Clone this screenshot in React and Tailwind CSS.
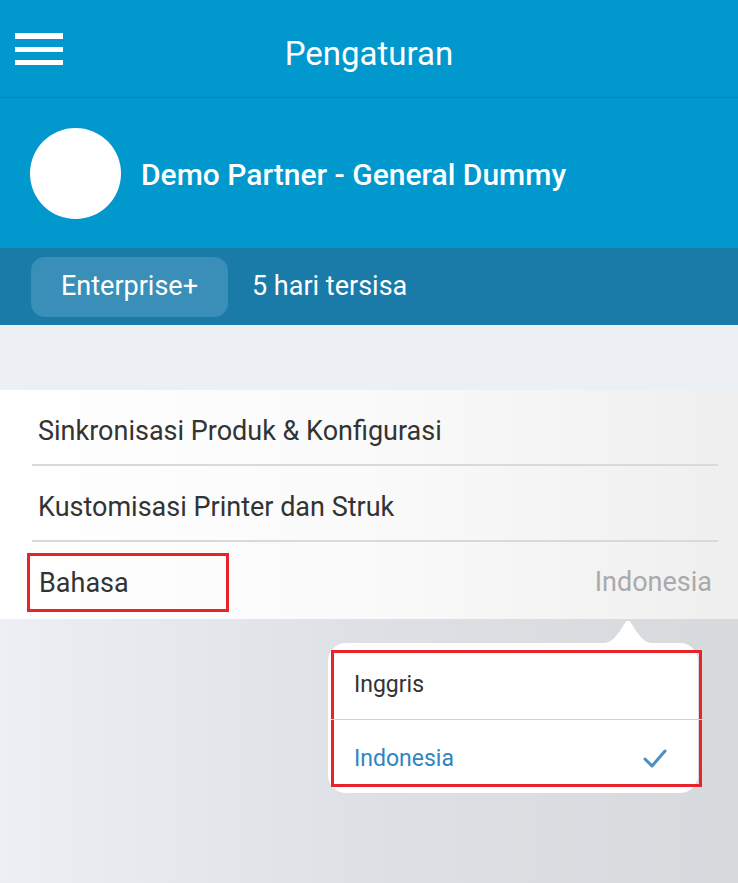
import React from 'react';

const rows = [
  { label: 'Sinkronisasi Produk & Konfigurasi' },
  { label: 'Kustomisasi Printer dan Struk' },
];

const Settings = () => {
  return (
    <div
      className="w-[738px] h-[883px] overflow-hidden flex flex-col bg-[#eceff3]"
      style={{ fontFamily: 'Roboto, "Noto Sans", sans-serif' }}
    >
      {/* Top bar */}
      <div className="h-[98px] shrink-0 bg-[#0098cd] border-b border-[#0a86b6] flex items-center relative">
        <div className="ml-[15px] w-[48px] flex flex-col gap-[8px]">
          <div className="h-[6px] bg-white" />
          <div className="h-[5px] bg-white" />
          <div className="h-[5px] bg-white" />
        </div>
        <div className="absolute inset-0 flex items-center justify-center text-white text-[33px] pt-[10px]">
          Pengaturan
        </div>
      </div>

      {/* Profile */}
      <div className="h-[150px] shrink-0 bg-[#0098cd] flex items-center pl-[30px] gap-[20px]">
        <div className="w-[91px] h-[91px] rounded-full bg-white" />
        <div className="text-white text-[30px] font-medium pt-[2px]">Demo Partner - General Dummy</div>
      </div>

      {/* Subscription */}
      <div className="h-[77px] shrink-0 bg-[#1a7ba8] flex items-center pl-[31px] gap-[24px]">
        <div className="h-[60px] w-[197px] rounded-[14px] bg-[#3a8fb8] flex items-center justify-center text-white text-[27px]">
          Enterprise+
        </div>
        <div className="text-white text-[27px]">5 hari tersisa</div>
      </div>

      <div className="h-[65px] shrink-0" />

      {/* List */}
      <div className="shrink-0 bg-gradient-to-r from-white via-[#fafafa] to-[#efefef]">
        {rows.map((r) => (
          <div key={r.label} className="ml-[32px] mr-[20px] h-[76px] border-b-2 border-[#d9d9d9] flex items-center pl-[6px] pt-[8px] text-[#333] text-[27px]">
            {r.label}
          </div>
        ))}
        <div className="h-[77px] flex items-center justify-between pl-[27px] pr-[26px] pt-[4px] text-[27px]">
          <div className="h-[59px] w-[202px] border-[3px] border-[#e8232a] flex items-center pl-[9px] pt-[1px] text-[#333]">
            Bahasa
          </div>
          <div className="text-[#aaaaaa]">Indonesia</div>
        </div>
      </div>

      {/* Overlay area with popover */}
      <div className="flex-1 relative bg-gradient-to-r from-[#eceff3] via-[#dde1e5] to-[#d6dadd]">
        <div className="absolute left-[328px] top-[24px] w-[370px]">
          <svg className="absolute left-[270px] top-[-26px]" width="60" height="28" viewBox="0 0 60 28">
            <path d="M0 27 C12 27 16 22 22 14 L27 6 C29 3 31 3 33 6 L38 14 C44 22 48 27 60 27 Z" fill="#ffffff" />
          </svg>
          <div className="bg-white rounded-[18px] h-[150px] pt-[7px] px-[3px]">
            <div className="border-[3px] border-[#e8232a] h-[137px] w-[371px] flex flex-col">
              <div className="h-[67px] flex items-center text-[23px] text-[#333] border-b border-[#d3d3d3] -mx-[3px] pl-[23px] pb-[2px]">
                Inggris
              </div>
              <div className="flex-1 flex items-center justify-between pl-[20px] pr-[32px] pt-[14px] text-[23px] text-[#2f86c0]">
                <span>Indonesia</span>
                <svg width="24" height="20" viewBox="0 0 24 20" fill="none">
                  <path d="M2 10 L9 17 L22 2" stroke="#4a8fc4" strokeWidth="3" strokeLinecap="round" strokeLinejoin="round" />
                </svg>
              </div>
            </div>
          </div>
        </div>
      </div>
    </div>
  );
};

export default function App() {
  return <Settings />;
}
